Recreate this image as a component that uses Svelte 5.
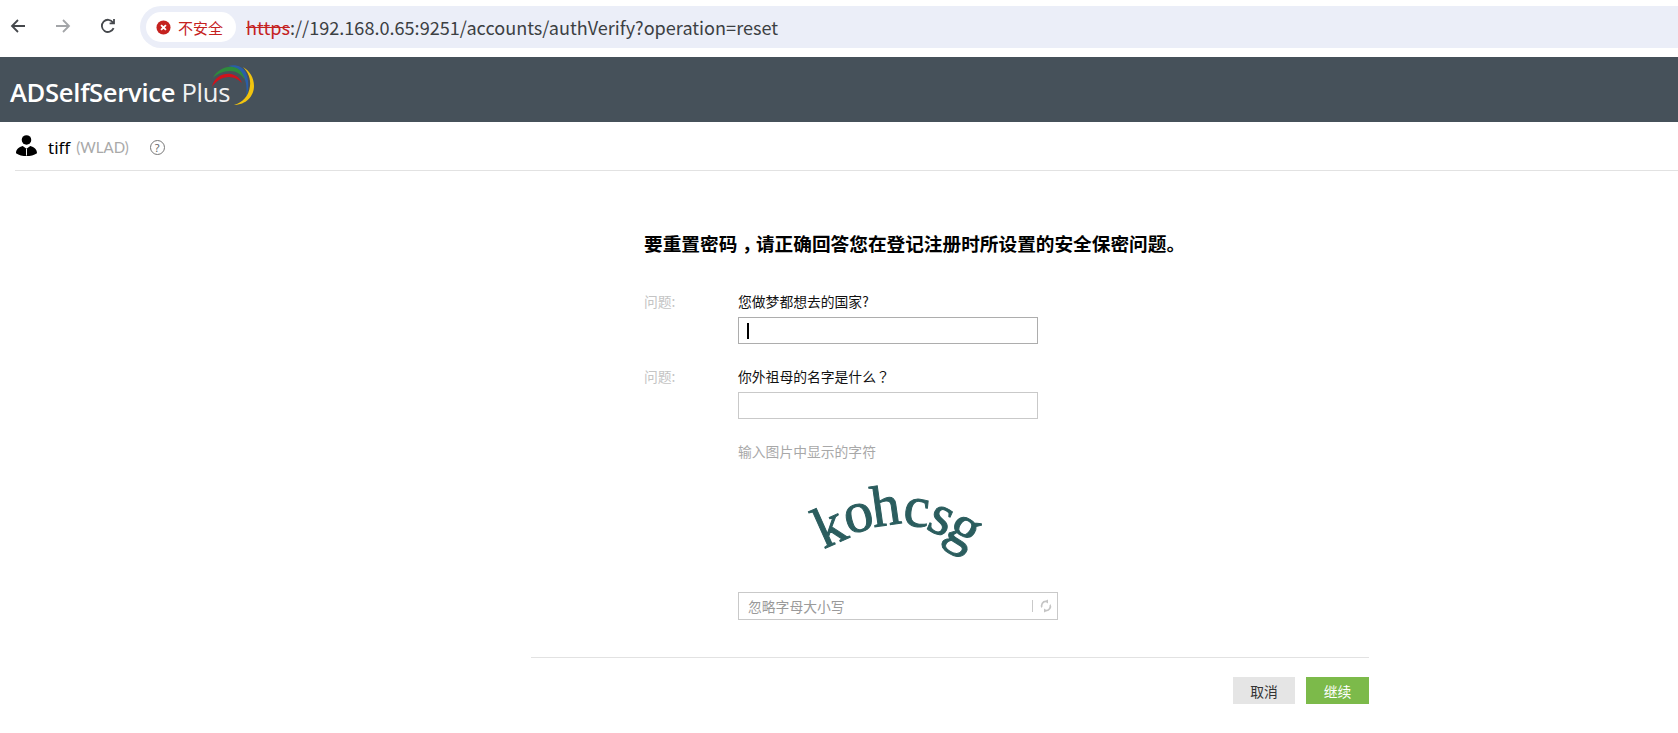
<script>
  const glyphs = [
    { c: 'k', x: 27, y: 74, r: -24 },
    { c: 'o', x: 52, y: 62, r: -14 },
    { c: 'h', x: 78, y: 56, r: -8 },
    { c: 'c', x: 105, y: 57, r: 6 },
    { c: 's', x: 125, y: 64, r: 24 },
    { c: 'g', x: 146, y: 74, r: 32 }
  ];
</script>

<div class="page">
  <nav class="chrome">
    <div class="navs">
      <svg class="nav" viewBox="0 0 16 16"><path d="M15 8H2M8 2L2 8l6 6" /></svg>
      <svg class="nav off" viewBox="0 0 16 16"><path d="M1 8h13M8 2l6 6-6 6" /></svg>
      <svg class="nav" viewBox="0 0 16 16"><path d="M13.6 10.2A6.1 6.1 0 1 1 13 4.4M14 1v4.4H9.6" /></svg>
    </div>
    <div class="omni">
      <div class="pill">
        <svg class="warn" viewBox="0 0 16 16"><circle cx="8" cy="8" r="7.5" /><path d="M5.4 5.4l5.2 5.2M10.6 5.4l-5.2 5.2" /></svg>
        <span>不安全</span>
      </div>
      <div class="url"><s>https</s>://192.168.0.65:9251/accounts/authVerify?operation=reset</div>
    </div>
  </nav>

  <header class="brand">
    <div class="logo">
      <span class="name">ADSelfService <em>Plus</em></span>
      <svg class="arcs" viewBox="0 0 46 44">
        <path class="blue" d="M17 2C24 0 32 2 35 9C38 16 38 26 35 34C36 26 36 18 32 12C29 6 23 3 17 2Z" />
        <path class="green" d="M2 14C6 6 14 2 22 3C28 4 32 8 34 16C30 10 25 7 19 7C12 7 6 10 2 14Z" />
        <path class="red" d="M1 23C3 13 12 9 20 10C25 11 29 14 31 19C27 15 23 13 18 13C11 13 5 17 1 23Z" />
        <path class="yellow" d="M32 3C39 7 43 14 43 22C43 32 35 41 23 41C31 39 38 32 39 22C40 15 37 8 32 3Z" />
      </svg>
    </div>
  </header>

  <div class="user">
    <svg class="avatar" viewBox="0 0 22 22">
      <circle cx="11" cy="5.2" r="5" />
      <path d="M0 19c0-4 3-6.500 7-7.500l4 3 4-3c4 1 7 3.500 7 7.500-3 2-7 3-11 3s-8-1-11-3z" />
      <path class="tie" d="M11 14.500v7" />
    </svg>
    <span class="uname">tiff</span>
    <span class="dom">(WLAD)</span>
    <span class="help">?</span>
  </div>

  <main class="main">
    <h1>要重置密码<span class="cm">，</span>请正确回答您在登记注册时所设置的安全保密问题。</h1>

    <div class="row">
      <div class="lab">问题:</div>
      <div class="col">
        <div class="q">您做梦都想去的国家?</div>
        <div class="field focus"><i class="caret"></i></div>
      </div>
    </div>

    <div class="row second">
      <div class="lab">问题:</div>
      <div class="col">
        <div class="q">你外祖母的名字是什么<span class="qm">？</span></div>
        <div class="field"></div>
      </div>
    </div>

    <div class="row third">
      <div class="lab"></div>
      <div class="col">
        <div class="hint">输入图片中显示的字符</div>
        <svg class="captcha" viewBox="0 0 190 100">
          {#each glyphs as g}
            <text x={g.x} y={g.y} transform="rotate({g.r} {g.x} {g.y})">{g.c}</text>
          {/each}
        </svg>
        <div class="capbox">
          <span class="ph">忽略字母大小写</span>
          <i class="sep"></i>
          <svg class="refresh" viewBox="0 0 14 14"><path d="M2.500 9A5 5 0 0 1 7 1.500l2-1v4L7 3.300A3.500 3.500 0 0 0 3.500 7.500zM11.500 5A5 5 0 0 1 7 12.500l-2 1v-4l2 1.200a3.500 3.500 0 0 0 3.500-4.200z" /></svg>
        </div>
      </div>
    </div>

    <div class="actions">
      <button class="cancel">取消</button>
      <button class="go">继续</button>
    </div>
  </main>
</div>

<style>
  :global(body) {
    margin: 0;
    background: #fff;
  }
  .page {
    width: 1678px;
    height: 733px;
    overflow: hidden;
    font-family: "Noto Sans CJK SC", "Noto Sans", sans-serif;
  }
  .cm {
    display: inline-block;
    width: 1em;
    text-align: center;
    font-feature-settings: "halt";
  }
  .qm {
    font-family: "Noto Sans CJK TC", sans-serif;
    display: inline-block;
    width: 0.8em;
    text-align: center;
    font-feature-settings: "halt";
  }

  .chrome {
    height: 57px;
    box-sizing: border-box;
    padding-top: 6px;
    display: flex;
    align-items: flex-start;
  }
  .navs {
    width: 140px;
    height: 40px;
    flex: none;
    box-sizing: border-box;
    padding-left: 10px;
    display: flex;
    align-items: center;
    gap: 29px;
  }
  .nav {
    width: 16px;
    height: 16px;
    fill: none;
    stroke: #45484c;
    stroke-width: 1.800;
  }
  .nav.off {
    stroke: #a3a5a8;
  }
  .omni {
    flex: 1;
    height: 42px;
    background: #ebeef8;
    border-radius: 21px 0 0 21px;
    display: flex;
    align-items: center;
    padding-left: 6px;
  }
  .pill {
    width: 90px;
    height: 30px;
    box-sizing: border-box;
    background: #fff;
    border-radius: 15px;
    display: flex;
    align-items: center;
    gap: 7px;
    padding-left: 10px;
    color: #c5221f;
    font-size: 15px;
    flex: none;
  }
  .warn {
    width: 15px;
    height: 15px;
  }
  .warn circle {
    fill: #c5221f;
  }
  .warn path {
    stroke: #fff;
    stroke-width: 2;
    fill: none;
  }
  .url {
    margin-left: 10px;
    font-size: 18.100px;
    color: #3c4043;
    white-space: nowrap;
  }
  .url s {
    color: #c5221f;
  }

  .brand {
    height: 65px;
    background: #46515a;
    display: flex;
    align-items: center;
  }
  .logo {
    margin-left: 10px;
    display: flex;
    align-items: flex-end;
    position: relative;
  }
  .name {
    font-family: "Open Sans", sans-serif;
    font-size: 25.600px;
    font-weight: 600;
    color: #fff;
    letter-spacing: -0.300px;
    white-space: nowrap;
    line-height: 30px;
    margin-top: 8px;
    margin-bottom: 1px;
  }
  .name em {
    font-style: normal;
    font-weight: 400;
    opacity: 0.92;
  }
  .arcs {
    position: absolute;
    left: 201px;
    top: -6px;
    width: 46px;
    height: 44px;
  }
  .blue { fill: #2a5ea8; }
  .green { fill: #2e8b3d; }
  .red { fill: #d0121b; }
  .yellow { fill: #f2c40f; }

  .user {
    margin-left: 15px;
    height: 49px;
    box-sizing: border-box;
    border-bottom: 1px solid #e2e2e2;
    display: flex;
    align-items: center;
    padding-top: 2px;
  }
  .avatar {
    width: 21px;
    height: 21px;
    margin: 0 0 4px 1px;
    fill: #000;
  }
  .tie {
    stroke: #fff;
    stroke-width: 1;
    fill: none;
  }
  .uname {
    margin-left: 11px;
    font-size: 17px;
    font-family: "Noto Sans", sans-serif;
    color: #000;
  }
  .dom {
    margin-left: 6px;
    font-family: "Lato", sans-serif;
    font-size: 15px;
    color: #a9a9a9;
  }
  .help {
    margin-left: 21px;
    width: 13px;
    height: 13px;
    border: 1px solid #777;
    border-radius: 50%;
    color: #666;
    font-size: 11px;
    line-height: 13px;
    text-align: center;
    font-family: "Noto Sans", sans-serif;
  }

  .main {
    margin-left: 531px;
    width: 838px;
  }
  h1 {
    margin: 58px 0 0 113px;
    font-size: 18.670px;
    line-height: 28px;
    font-weight: 700;
    color: #000;
    white-space: nowrap;
  }
  .row {
    display: flex;
    margin-top: 34px;
    margin-left: 113px;
  }
  .row.second {
    margin-top: 22px;
  }
  .row.third {
    margin-top: 22px;
  }
  .lab {
    width: 94px;
    flex: none;
    font-size: 13.800px;
    line-height: 20px;
    color: #c4c4c4;
  }
  .col {
    display: flex;
    flex-direction: column;
    align-items: flex-start;
  }
  .q {
    font-size: 13.800px;
    line-height: 20px;
    color: #111;
    margin-bottom: 6px;
    white-space: nowrap;
  }
  .field {
    width: 300px;
    height: 27px;
    box-sizing: border-box;
    border: 1px solid #c9c9c9;
    display: flex;
    align-items: center;
  }
  .field.focus {
    border-color: #adadad;
  }
  .caret {
    width: 2px;
    height: 16px;
    background: #000;
    margin-left: 8px;
  }
  .hint {
    font-size: 13.800px;
    line-height: 20px;
    color: #a8a8a8;
  }
  .captcha {
    width: 190px;
    height: 100px;
    margin: 8px 0 0 72px;
    overflow: visible;
  }
  .captcha text {
    font-family: "Liberation Serif", serif;
    font-size: 58px;
    fill: #2b5d5e;
    text-anchor: middle;
    stroke: #2b5d5e;
    stroke-width: 1;
  }
  .capbox {
    width: 320px;
    height: 28px;
    margin-top: 23px;
    box-sizing: border-box;
    border: 1px solid #c9c9c9;
    display: flex;
    align-items: center;
    padding: 0 4px 0 9px;
  }
  .ph {
    flex: 1;
    font-size: 13.800px;
    color: #9a9a9a;
  }
  .sep {
    width: 1px;
    height: 12px;
    background: #c9c9c9;
    margin-right: 6px;
  }
  .refresh {
    width: 14px;
    height: 14px;
    fill: #c4c4c4;
  }
  .actions {
    margin-top: 37px;
    border-top: 1px solid #e2e2e2;
    padding-top: 19px;
    display: flex;
    justify-content: flex-end;
    gap: 11px;
  }
  button {
    height: 27px;
    border: 0;
    padding: 0;
    font-family: inherit;
    font-size: 13.800px;
  }
  .cancel {
    width: 62px;
    background: #e5e5e5;
    color: #333;
  }
  .go {
    width: 63px;
    background: #7cba4a;
    color: #fff;
  }
</style>
